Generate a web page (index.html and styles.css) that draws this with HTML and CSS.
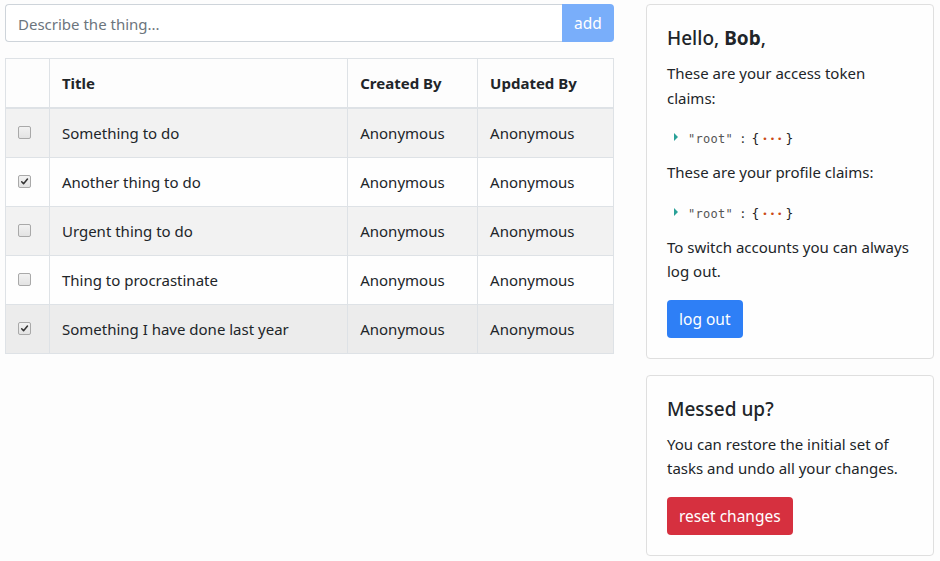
FILE: index.html
```html
<!DOCTYPE html>
<html lang="en">
<head>
<meta charset="utf-8">
<title>Todos</title>
<link rel="stylesheet" href="styles.css">
</head>
<body>
<div class="page">
  <main class="main">
    <form class="add-form">
      <input class="add-input" type="text" placeholder="Describe the thing...">
      <button class="btn btn-add" type="button">add</button>
    </form>
    <table class="tasks">
      <thead>
        <tr><th class="col-check"></th><th class="col-title">Title</th><th class="col-created">Created By</th><th class="col-updated">Updated By</th></tr>
      </thead>
      <tbody>
        <tr class="striped"><td class="col-check"><span class="check"></span></td><td>Something to do</td><td>Anonymous</td><td>Anonymous</td></tr>
        <tr><td class="col-check"><span class="check checked"><svg viewBox="0 0 13 13"><path d="M3.2 6.8 L5.4 9.2 L10 3.6" /></svg></span></td><td>Another thing to do</td><td>Anonymous</td><td>Anonymous</td></tr>
        <tr class="striped"><td class="col-check"><span class="check"></span></td><td>Urgent thing to do</td><td>Anonymous</td><td>Anonymous</td></tr>
        <tr><td class="col-check"><span class="check"></span></td><td>Thing to procrastinate</td><td>Anonymous</td><td>Anonymous</td></tr>
        <tr class="hover"><td class="col-check"><span class="check checked"><svg viewBox="0 0 13 13"><path d="M3.2 6.8 L5.4 9.2 L10 3.6" /></svg></span></td><td>Something I have done last year</td><td>Anonymous</td><td>Anonymous</td></tr>
      </tbody>
    </table>
  </main>
  <aside class="side">
    <section class="card">
      <h5 class="card-title">Hello, <b>Bob</b>,</h5>
      <p class="card-text">These are your access token claims:</p>
      <div class="json"><span class="caret"></span><span class="key">"root"</span><span class="colon">:</span><span class="brace">{</span><span class="dots">&#8226;&#8226;&#8226;</span><span class="brace">}</span></div>
      <p class="card-text">These are your profile claims:</p>
      <div class="json"><span class="caret"></span><span class="key">"root"</span><span class="colon">:</span><span class="brace">{</span><span class="dots">&#8226;&#8226;&#8226;</span><span class="brace">}</span></div>
      <p class="card-text">To switch accounts you can always log out.</p>
      <button class="btn btn-primary" type="button">log out</button>
    </section>
    <section class="card">
      <h5 class="card-title">Messed up?</h5>
      <p class="card-text">You can restore the initial set of tasks and undo all your changes.</p>
      <button class="btn btn-danger" type="button">reset changes</button>
    </section>
  </aside>
</div>
</body>
</html>
```

FILE: styles.css
```css
* { box-sizing: border-box; }

body {
  margin: 0;
  background: #fdfdfd;
  color: #212529;
  font-family: "Noto Sans", "Open Sans", sans-serif;
  font-size: 15px;
  line-height: 24px;
}

.page {
  display: flex;
  align-items: flex-start;
  gap: 32px;
  padding: 4px 6px 0 5px;
}

.main {
  width: 609px;
  flex: none;
}

.add-form {
  display: flex;
  height: 38px;
  margin: 0 0 16px;
}

.add-input {
  flex: 1;
  min-width: 0;
  height: 38px;
  border: 1px solid #ced4da;
  border-right: none;
  border-radius: 4px 0 0 4px;
  padding: 7px 12px 5px;
  font: inherit;
  color: #495057;
  background: #fff;
}

.add-input::placeholder { color: #6c757d; }

.btn {
  border: none;
  font: inherit;
  font-size: 15.5px;
  color: #fff;
  height: 38px;
  padding: 6px 12px;
  border-radius: 4px;
}

.btn-add {
  width: 52px;
  background: #79aefa;
  border-radius: 0 4px 4px 0;
}

.tasks {
  width: 609px;
  border-collapse: collapse;
  border: 1px solid #dee2e6;
}

.tasks th,
.tasks td {
  border: 1px solid #dee2e6;
  padding: 12px;
  text-align: left;
  vertical-align: middle;
  height: 49px;
}

.tasks th {
  font-weight: 700;
  border-bottom: 2px solid #dee2e6;
  height: 49px;
}

.tasks tbody tr { background: #fefefe; }
.tasks tbody tr.striped { background: #f2f2f2; }
.tasks tbody tr.hover { background: #ececec; }

.col-check { width: 44px; }
.col-title { width: 299px; }
.col-created { width: 130px; }
.col-updated { width: 136px; }

.tasks td.col-check { padding: 0; text-align: center; }

.check {
  display: inline-block;
  width: 13px;
  height: 13px;
  margin: 0 6px 0 0;
  border: 1px solid #a9a9a9;
  border-radius: 2px;
  background: linear-gradient(#f2f2f2, #e3e3e3);
  vertical-align: middle;
  position: relative;
  top: -2px;
}

.check svg {
  display: block;
  width: 11px;
  height: 11px;
}

.check svg path {
  fill: none;
  stroke: #333;
  stroke-width: 1.8;
  stroke-linecap: round;
  stroke-linejoin: round;
}

.side {
  width: 288px;
  flex: none;
  display: flex;
  flex-direction: column;
  gap: 16px;
}

.card {
  border: 1px solid #dfdfdf;
  border-radius: 4px;
  background: #fefefe;
  padding: 20px;
}

.card-title {
  margin: 1px 0 11px;
  font-size: 19px;
  line-height: 24px;
  font-weight: 500;
}

.card-title b { font-weight: 700; }

.card-text {
  margin: 0 0 16px;
  line-height: 24.5px;
}

.json {
  display: flex;
  align-items: center;
  height: 23px;
  padding: 3px 0 0 7px;
  margin: 0 0 11px;
  font-family: "DejaVu Sans Mono", monospace;
  font-size: 12px;
  color: #444;
}

.caret {
  width: 0;
  height: 0;
  border-top: 4px solid transparent;
  border-bottom: 4px solid transparent;
  border-left: 4px solid #2aa198;
  margin: -4px 10px 0 0;
}

.key { color: #555; letter-spacing: 0.3px; }
.colon { margin: 0 5px 0 6px; color: #333; }
.brace { color: #222; font-size: 13px; }
.dots { color: #cb4b16; font-size: 9px; letter-spacing: 2px; margin: 0 1px 0 3px; }

.btn-primary { background: #2e7ff6; }
.btn-danger { background: #d6303f; }
```
